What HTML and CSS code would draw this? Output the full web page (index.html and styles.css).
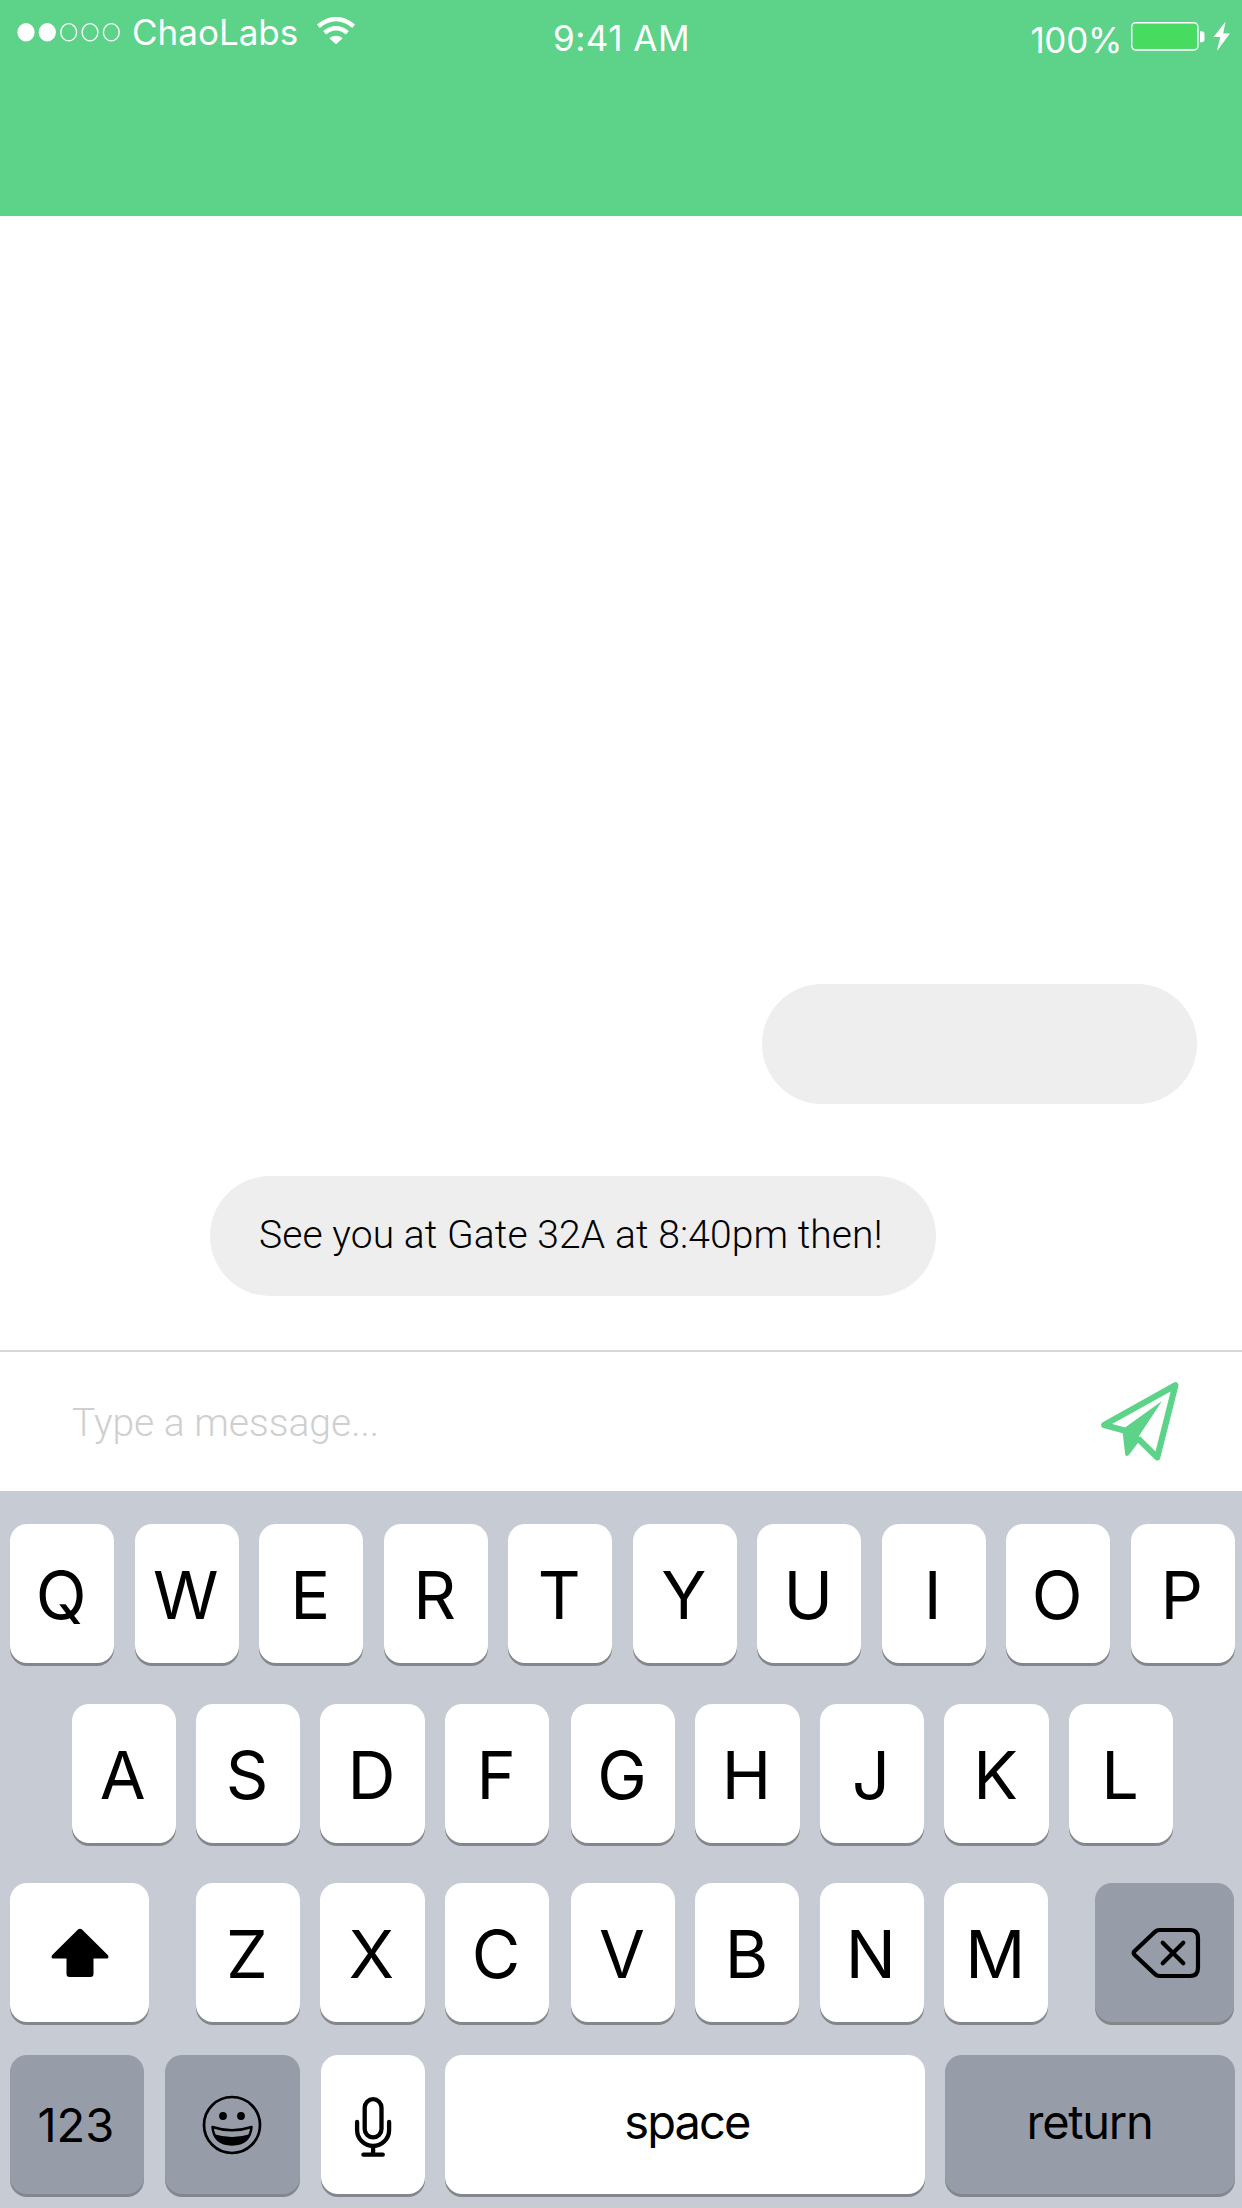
FILE: index.html
```html
<!DOCTYPE html>
<html lang="en">
<head>
<meta charset="utf-8">
<title>Chat</title>
<link rel="stylesheet" href="styles.css">
</head>
<body>
<div class="screen">
  <header class="header">
    <div class="carrier">
      <svg class="signal" width="104" height="20" viewBox="0 0 104 20">
        <g fill="#fff"><ellipse cx="9" cy="10.300" rx="8.600" ry="9.200"/><ellipse cx="30.300" cy="10.300" rx="8.600" ry="9.200"/></g>
        <g fill="none" stroke="#fff" stroke-width="1.300"><ellipse cx="51.700" cy="10.300" rx="7.900" ry="8.600"/><ellipse cx="73" cy="10.300" rx="7.900" ry="8.600"/><ellipse cx="94.300" cy="10.300" rx="7.900" ry="8.600"/></g>
      </svg>
      <span class="carrier-name">ChaoLabs</span>
      <svg class="wifi" width="40" height="28" viewBox="0 0 40 28">
        <g fill="none" stroke="#fff" stroke-width="4.400"><path d="M2.400 9.200Q20-5 37.600 9.200"/><path d="M8.600 15.700Q20 6.600 31.400 15.700"/></g>
        <path fill="#fff" d="M13.300 21.200Q20 16.400 26.700 21.200L20 27.300Z"/>
      </svg>
    </div>
    <div class="clock">9:41 AM</div>
    <div class="power">
      <span class="percent">100%</span>
      <svg class="battery" width="101" height="32" viewBox="0 0 101 32">
        <rect x="1.700" y="2.800" width="66.200" height="27.200" rx="4" fill="none" stroke="#fff" stroke-width="1.400"/>
        <rect x="3" y="4.200" width="63.600" height="24.400" rx="2.500" fill="#47dc60"/>
        <path fill="#fff" d="M70 11.200h1.500q3 0 3 3v5q0 3-3 3H70z"/>
        <path fill="#fff" d="M95.600 1.500 83.600 17h6.700l-3.400 14L100 13.400h-6.800z"/>
      </svg>
    </div>
  </header>
  <main class="messages">
    <div class="bubble bubble-own"></div>
    <div class="bubble bubble-peer">See you at Gate 32A at 8:40pm then!</div>
  </main>
  <div class="composer">
    <span class="placeholder">Type a message...</span>
    <svg class="send" width="80" height="80" viewBox="0 0 80 80">
      <path fill="none" stroke="#5cd389" stroke-width="6.200" stroke-linejoin="round" d="M28 50.600 4.200 43.900 75.400 4.300 57.200 76.400 38 57.500"/>
      <path fill="#5cd389" stroke="none" d="M62 20 39.300 54.600 39 60.500 29 73.800Q27.200 76 25.200 74L22.500 50 25 46.500Z"/>
    </svg>
  </div>
  <section class="keyboard">
    <div class="row row-1">
      <div class="key">Q</div><div class="key">W</div><div class="key">E</div><div class="key">R</div><div class="key">T</div><div class="key">Y</div><div class="key">U</div><div class="key">I</div><div class="key">O</div><div class="key">P</div>
    </div>
    <div class="row row-2">
      <div class="key">A</div><div class="key">S</div><div class="key">D</div><div class="key key-split">F</div><div class="key">G</div><div class="key">H</div><div class="key">J</div><div class="key">K</div><div class="key">L</div>
    </div>
    <div class="row row-3">
      <div class="key key-shift">
        <svg width="58" height="50" viewBox="0 0 58 50"><path fill="#000" d="M27 1.500Q29 0 31 1.500L57 27.200Q58.400 30.500 55.500 30.500H42.500V46Q42.500 49 39.500 49H18.500Q15.500 49 15.500 46V30.500H2.500Q-.4 30.500 1 27.200Z"/></svg>
      </div>
      <div class="key">Z</div><div class="key">X</div><div class="key key-split">C</div><div class="key">V</div><div class="key">B</div><div class="key">N</div><div class="key">M</div>
      <div class="key key-dark key-delete">
        <svg width="70" height="52" viewBox="0 0 70 52" fill="none" stroke="#000" stroke-width="4.200" stroke-linecap="round"><path d="M23.500 5.300 3.500 24.200Q1.900 26 3.500 27.800L23.500 46.700Q25.400 49 28.600 49H59Q67 49 67 41V11Q67 3 59 3H28.600Q25.400 3 23.500 5.300Z"/><path d="M31.700 15.700 52.300 36.300M52.300 15.700 31.700 36.300"/></svg>
      </div>
    </div>
    <div class="row row-4">
      <div class="key key-dark key-numbers">123</div>
      <div class="key key-dark key-emoji">
        <svg width="60" height="60" viewBox="0 0 60 60"><circle cx="30" cy="30" r="28" fill="none" stroke="#000" stroke-width="2.700"/><circle cx="21" cy="21" r="3.900"/><circle cx="39" cy="21" r="3.900"/><path d="M10.500 32Q30 38.500 49.500 32Q48 49.500 30 49.500T10.500 32Z" fill="none" stroke="#000" stroke-width="2.500" stroke-linejoin="round"/><path d="M12.500 39.200Q30 44.800 47.500 39.200Q43.500 50 30 50T12.500 39.200Z"/></svg>
      </div>
      <div class="key key-mic">
        <svg width="38" height="62" viewBox="0 0 38 62" fill="none" stroke="#000" stroke-width="4.300" stroke-linecap="round"><rect x="10.700" y="3.200" width="16.800" height="38.200" rx="8.400"/><path d="M3.100 26v8a16 16 0 0 0 32 0v-8M19.100 50v8.500M9.400 58.700h19.400"/></svg>
      </div>
      <div class="key key-space">space</div>
      <div class="key key-dark key-return">return</div>
    </div>
  </section>
</div>
</body>
</html>
```
FILE: styles.css
```css
* { box-sizing: border-box; }
body { margin: 0; background: #fff; }
svg { display: block; flex: none; }

.screen {
  width: 1242px;
  height: 2208px;
  display: flex;
  flex-direction: column;
  overflow: hidden;
  font-family: Inter, "Liberation Sans", sans-serif;
}

.header {
  height: 216px;
  flex: none;
  display: grid;
  grid-template-columns: 1fr auto 1fr;
  align-items: start;
  background: #5cd389;
  color: #fff;
  font-size: 35px;
  font-weight: 400;
  line-height: 44px;
  white-space: nowrap;
}
.carrier { display: flex; padding: 10px 0 0 17px; }
.signal { margin-top: 12px; }
.carrier-name { width: 167px; margin-left: 11px; letter-spacing: 0; }
.wifi { margin: 7px 0 0 17px; }
.clock { padding: 16px 0 0 1px; letter-spacing: 0.5px; }
.power { display: flex; justify-content: flex-end; padding: 18px 11px 0 0; }
.percent { letter-spacing: -0.3px; }
.battery { margin: 2px 0 0 8px; }

.messages {
  flex: 1;
  display: flex;
  flex-direction: column;
  justify-content: flex-end;
  gap: 72px;
  padding: 0 45px 54px 210px;
}
.bubble {
  height: 120px;
  border-radius: 60px;
  background: #eee;
  color: #000;
  font: 300 39px/118px Roboto, sans-serif;
  letter-spacing: 0.1px;
  white-space: nowrap;
}
.bubble-own { width: 435px; align-self: flex-end; }
.bubble-peer { width: 726px; padding-left: 49px; }

.composer {
  height: 141px;
  flex: none;
  display: flex;
  justify-content: space-between;
  padding: 0 62px 0 72px;
  border-top: 2px solid #d8d8d8;
  color: #cfcfcf;
  font: 300 39px/142px Roboto, sans-serif;
}
.send { margin-top: 29px; }

.keyboard {
  height: 717px;
  flex: none;
  padding-top: 33px;
  background: #c7cbd4;
}
.row { display: flex; gap: 20.3px; padding-left: 10.2px; height: 139px; }
.row-2 { margin-top: 41px; padding-left: 71.5px; }
.row-3 { margin-top: 40px; }
.row-4 { margin-top: 33px; }

.key {
  width: 104.2px;
  height: 139px;
  flex: none;
  display: flex;
  align-items: center;
  justify-content: center;
  padding: 2px 2px 0 0;
  border-radius: 17px;
  background: #fff;
  box-shadow: 0 3px 0 #83868b;
  color: #000;
  font-size: 66.5px;
}
.row-2 .key, .row-3 .key { padding-top: 3px; }
.row .key-dark { background: #969da9; }
.key-split { margin-right: 1.5px; }
.row .key-shift { width: 139.2px; margin-right: 26.2px; padding: 0; }
.row .key-delete { width: 139.5px; margin-left: 26px; padding: 0 0 0 3px; }
.row-4 .key { font-size: 47px; padding: 0; }
.row-4 .key-numbers { width: 134.2px; padding-right: 3px; }
.row-4 .key-emoji { width: 135.7px; padding-right: 1px; }
.row-4 .key-mic { padding: 4px 0 0 1px; }
.row .key-space { width: 479.5px; }
.row .key-return { width: 290.2px; }
.row-4 .key-space { padding: 0 0 7px 4px; letter-spacing: -1.9px; }
.row-4 .key-return { padding: 0 1px 7px 0; letter-spacing: -1.3px; }
```
